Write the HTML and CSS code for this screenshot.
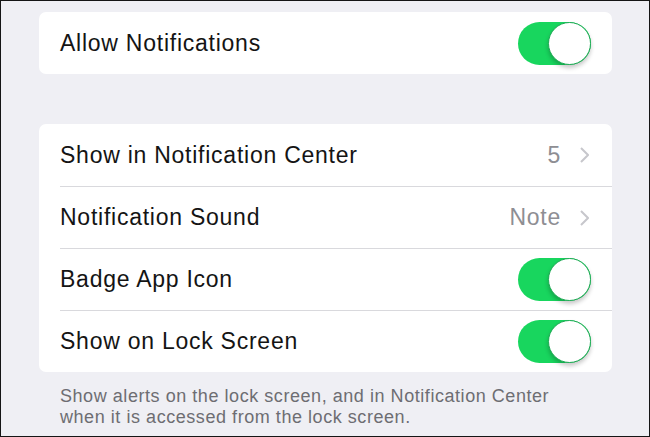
FILE: index.html
```html
<!DOCTYPE html>
<html>
<head>
<meta charset="utf-8">
<link rel="stylesheet" href="styles.css">
</head>
<body>
<div class="screen">
  <div class="group">
    <div class="row">
      <span class="label">Allow Notifications</span>
      <span class="switch"><span class="knob"></span></span>
    </div>
  </div>

  <div class="group second">
    <div class="row">
      <span class="label">Show in Notification Center</span>
      <span class="detail"><span class="value">5</span><svg class="chev" width="9" height="16" viewBox="0 0 9 16"><path d="M1 1 L8 8 L1 15" fill="none" stroke="#c7c7cc" stroke-width="2"/></svg></span>
    </div>
    <div class="row">
      <span class="label">Notification Sound</span>
      <span class="detail"><span class="value">Note</span><svg class="chev" width="9" height="16" viewBox="0 0 9 16"><path d="M1 1 L8 8 L1 15" fill="none" stroke="#c7c7cc" stroke-width="2"/></svg></span>
    </div>
    <div class="row">
      <span class="label">Badge App Icon</span>
      <span class="switch"><span class="knob"></span></span>
    </div>
    <div class="row">
      <span class="label">Show on Lock Screen</span>
      <span class="switch"><span class="knob"></span></span>
    </div>
  </div>

  <p class="footer">Show alerts on the lock screen, and in Notification Center when it is accessed from the lock screen.</p>
</div>
</body>
</html>
```

FILE: styles.css
```css
html, body {
  margin: 0;
  padding: 0;
}

body {
  width: 650px;
  height: 437px;
  overflow: hidden;
  font-family: "Liberation Sans", Arial, sans-serif;
}

.screen {
  box-sizing: border-box;
  width: 650px;
  height: 437px;
  border: 1px solid #151515;
  background: #efeff4;
  padding: 11px 37px 0 38px;
  display: flex;
  flex-direction: column;
}

.group {
  background: #ffffff;
  border-radius: 7px;
  overflow: hidden;
}

.group.second {
  margin-top: 50px;
}

.row {
  height: 62px;
  box-sizing: border-box;
  margin-left: 21px;
  padding-right: 21px;
  display: flex;
  align-items: center;
  justify-content: space-between;
  border-top: 1px solid #d9d9dd;
}

.row:first-child {
  border-top: none;
}

.label {
  font-size: 23px;
  letter-spacing: 0.75px;
  color: #141414;
}

.detail {
  display: flex;
  align-items: center;
  gap: 19px;
  padding-right: 2px;
}

.value {
  font-size: 23px;
  letter-spacing: 0.75px;
  color: #8e8e93;
}

.chev {
  display: block;
}

.switch {
  position: relative;
  width: 73px;
  height: 43px;
  border-radius: 22px;
  background: #18d65e;
  display: block;
}

.knob {
  position: absolute;
  right: 0;
  top: 0;
  width: 43px;
  height: 43px;
  box-sizing: border-box;
  border-radius: 50%;
  background: #ffffff;
  border: 1px solid #1faa55;
  box-shadow: 0 3px 4px rgba(0, 0, 0, 0.22);
}

.footer {
  margin: 14px 21px 0 21px;
  font-size: 18px;
  line-height: 21px;
  letter-spacing: 0.55px;
  color: #6d6d72;
}
```
